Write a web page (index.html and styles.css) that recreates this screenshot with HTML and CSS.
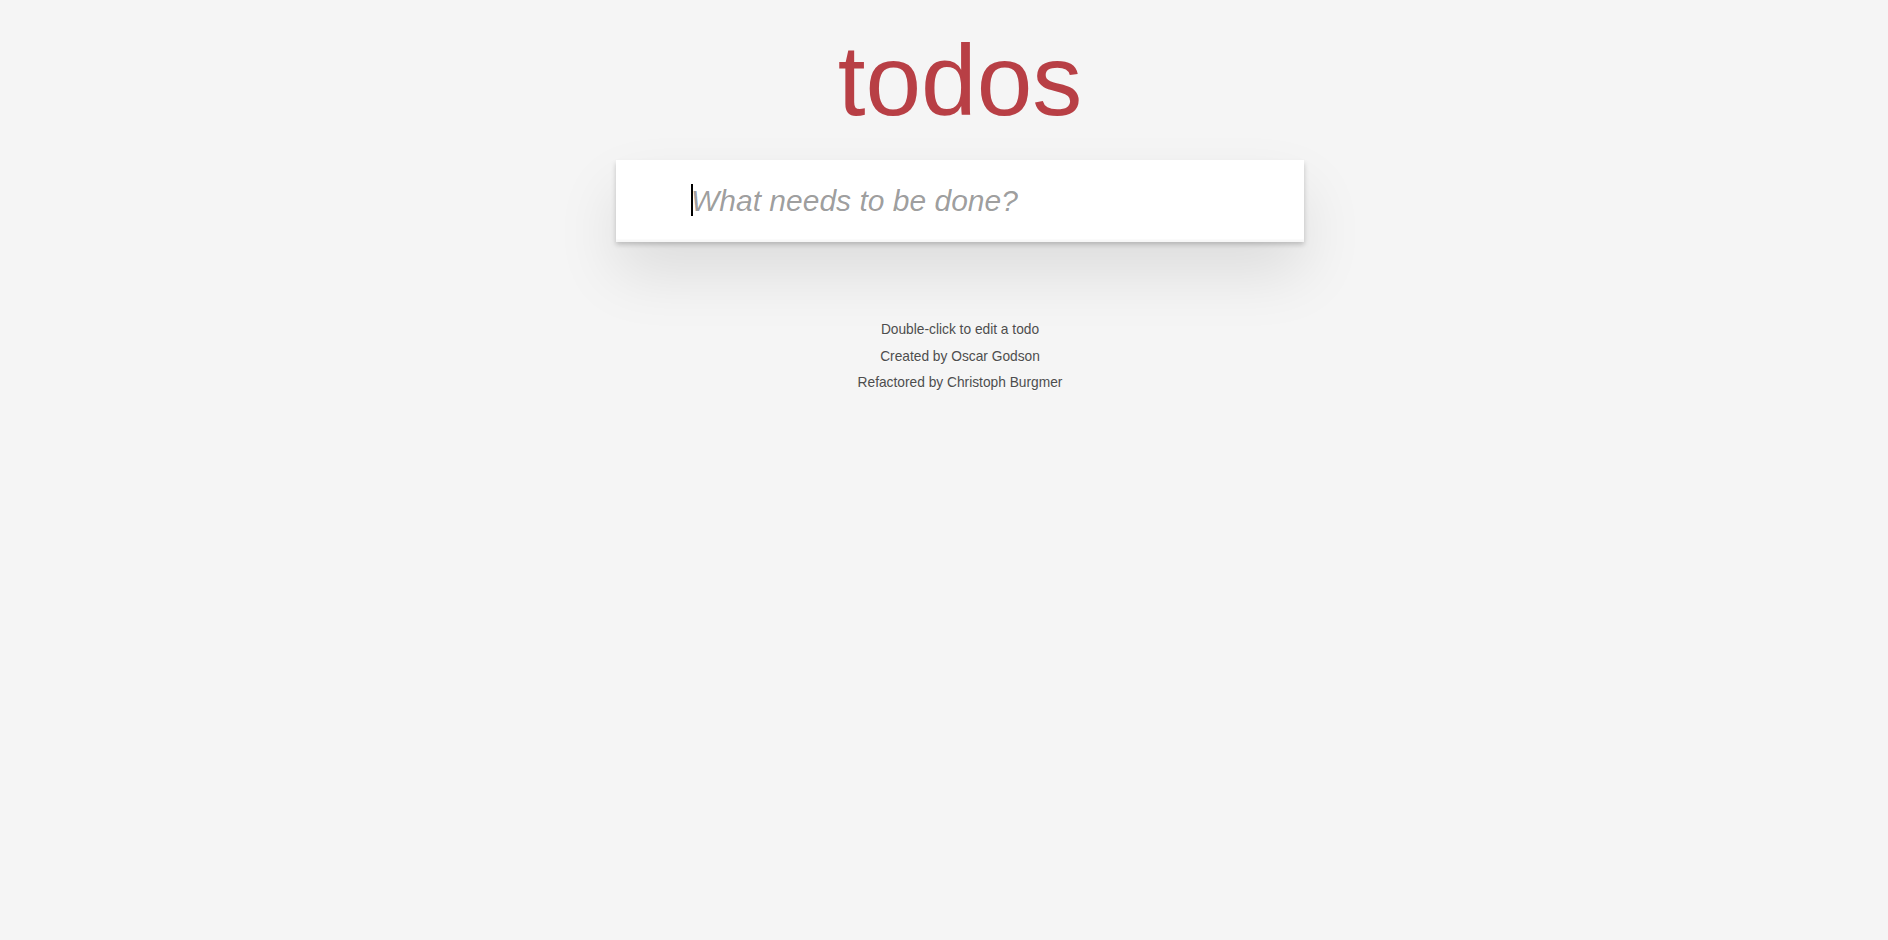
FILE: index.html
```html
<!DOCTYPE html>
<html lang="en">
<head>
<meta charset="utf-8">
<title>Todos</title>
<link rel="stylesheet" href="styles.css">
</head>
<body>
<div class="page">
  <h1 class="title">todos</h1>
  <section class="todoapp">
    <input class="new-todo" placeholder="What needs to be done?" autofocus>
    <span class="caret"></span>
  </section>
  <footer class="info">
    <p>Double-click to edit a todo</p>
    <p>Created by <a href="#">Oscar Godson</a></p>
    <p>Refactored by <a href="#">Christoph Burgmer</a></p>
  </footer>
</div>
</body>
</html>
```
FILE: styles.css
```css
html, body {
  margin: 0;
  padding: 0;
}
body {
  background: #f5f5f5;
  font-family: "Liberation Sans", Arial, Helvetica, sans-serif;
  font-size: 17.5px;
  line-height: 24.5px;
  color: #111111;
  padding-left: 32px;
}
.page {
  width: 688px;
  margin: 0 auto;
  padding-top: 1px;
}
.title {
  margin: 29px 0 30px 0;
  font-size: 100px;
  line-height: 100px;
  font-weight: 200;
  text-align: center;
  color: #b83f45;
  text-rendering: optimizeLegibility;
}
.todoapp {
  position: relative;
  background: #fff;
  box-shadow: 0 2.5px 5px 0 rgba(0, 0, 0, 0.2), 0 31px 62px 0 rgba(0, 0, 0, 0.1);
}
.new-todo {
  display: block;
  box-sizing: border-box;
  width: 100%;
  margin: 0;
  padding: 20px 20px 20px 75px;
  border: none;
  outline: none;
  background: transparent;
  font-family: inherit;
  font-size: 30px;
  line-height: 42px;
  height: 82px;
  color: inherit;
  caret-color: transparent;
  box-shadow: inset 0 -2.5px 1px rgba(0, 0, 0, 0.03);
}
.new-todo::placeholder {
  font-style: italic;
  font-weight: 400;
  color: rgba(0, 0, 0, 0.4);
}
.caret {
  position: absolute;
  left: 75px;
  top: 24px;
  width: 2px;
  height: 32px;
  background: #000;
  pointer-events: none;
}
.info {
  margin: 81px auto 0;
  color: #4d4d4d;
  font-size: 13.75px;
  text-shadow: 0 1px 0 rgba(255, 255, 255, 0.5);
  text-align: center;
}
.info p {
  line-height: 13.75px;
  margin: 12.75px 0;
}
.info a {
  color: inherit;
  text-decoration: none;
}
```
